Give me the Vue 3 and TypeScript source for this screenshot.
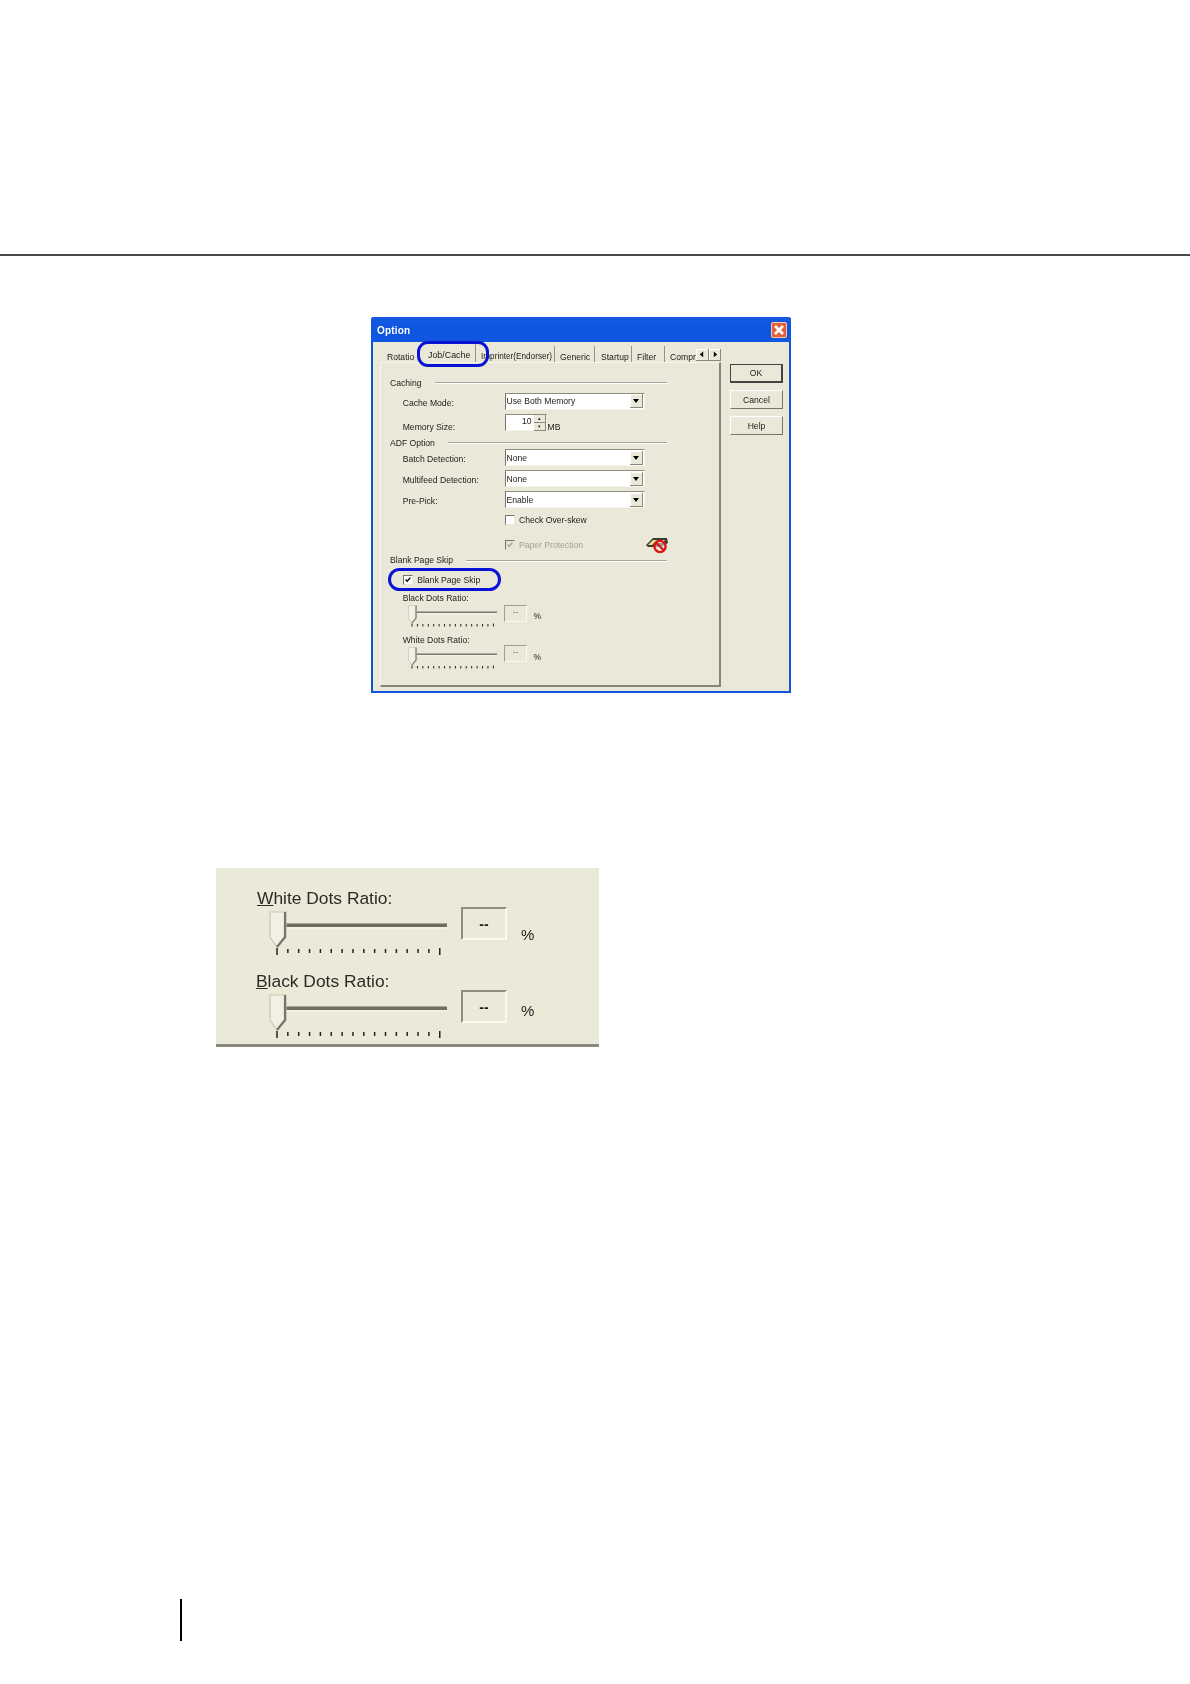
<script setup lang="ts">
const ticks: number[] = Array.from({ length: 16 }, (_, i) => 8 + i * 10.85)
const tabs = [
  { label: 'Rotatio', cls: 'tab-rot' },
  { label: 'Job/Cache', cls: 'tab-job' },
  { label: 'Imprinter(Endorser)', cls: 'tab-imp' },
  { label: 'Generic', cls: 'tab-gen' },
  { label: 'Startup', cls: 'tab-sta' },
  { label: 'Filter', cls: 'tab-fil' },
  { label: 'Compr', cls: 'tab-com' }
]
const combos = [
  { label: 'Batch Detection:', value: 'None', cls: 'mt0' },
  { label: 'Multifeed Detection:', value: 'None', cls: 'mt4' },
  { label: 'Pre-Pick:', value: 'Enable', cls: 'mt4' }
]
const smallSliders = [
  { label: 'Black Dots Ratio:', cls: 'first-small' },
  { label: 'White Dots Ratio:', cls: 'second-small' }
]
const bigSliders = [
  { first: 'W', rest: 'hite Dots Ratio:', cls: 'big-first' },
  { first: 'B', rest: 'lack Dots Ratio:', cls: 'big-second' }
]
</script>

<template>
  <main class="page">
    <div class="rule"></div>

    <section class="dialog">
      <header class="titlebar">
        <span class="title">Option</span>
        <span class="close">
          <svg viewBox="0 0 16 16" width="16" height="16">
            <path d="M4 4 L12 12 M12 4 L4 12" stroke="#fff" stroke-width="2.6" />
          </svg>
        </span>
      </header>

      <div class="body">
        <div class="tabs-col">
          <nav class="tabstrip">
            <span v-for="t in tabs" :key="t.label" class="tab" :class="t.cls">{{ t.label }}</span>
            <span class="scroll">
              <svg viewBox="0 0 12 11" width="12" height="11"><path d="M7.5 2.5 V8.5 L4 5.5 Z" fill="#000" /></svg>
            </span>
            <span class="scroll">
              <svg viewBox="0 0 12 11" width="12" height="11"><path d="M5 2.5 V8.5 L8.5 5.5 Z" fill="#000" /></svg>
            </span>
          </nav>

          <div class="panel">
            <div class="heading h15"><span>Caching</span><i></i></div>

            <div class="row h22">
              <span class="label nudge">Cache Mode:</span>
              <div class="combo"><span>Use Both Memory</span><b class="drop"></b></div>
            </div>

            <div class="row h21">
              <span class="label low">Memory Size:</span>
              <div class="spin">
                <span class="spin-val">10</span>
                <span class="spin-btns"><b>▴</b><b>▾</b></span>
              </div>
              <span class="mb">MB</span>
            </div>

            <div class="heading h13 mt3"><span>ADF Option</span><i></i></div>

            <div v-for="c in combos" :key="c.label" class="row h17" :class="c.cls">
              <span class="label">{{ c.label }}</span>
              <div class="combo"><span>{{ c.value }}</span><b class="drop"></b></div>
            </div>

            <div class="row h16 mt4">
              <span class="label"></span>
              <span class="check"></span>
              <span class="check-text">Check Over-skew</span>
            </div>

            <div class="row h17 mt8">
              <span class="label"></span>
              <span class="check disabled">
                <svg viewBox="0 0 10 10" width="9" height="9"><path d="M2 5 L4 7.2 L8 2.6" fill="none" stroke="#a5a392" stroke-width="1.6" /></svg>
              </span>
              <span class="check-text muted">Paper Protection</span>
              <svg class="no-paper" viewBox="0 0 24 18" width="24" height="18">
                <path d="M1 9 L8 2 H22 L23 7 L16 11 H3 Z" fill="#3b3a33" />
                <path d="M3 9 L8 4 H12 L7 9 Z" fill="#efe08a" />
                <path d="M10 7 L13 4 H20 L17 7 Z" fill="#f6f2dc" />
                <circle cx="15" cy="10.5" r="5.6" fill="#efe9df" fill-opacity="0.55" stroke="#dc1414" stroke-width="2.4" />
                <path d="M11 6.5 L19 14.5" stroke="#dc1414" stroke-width="2.2" />
              </svg>
            </div>

            <div class="heading h14"><span>Blank Page Skip</span><i></i></div>

            <div class="row h25">
              <span class="check indent">
                <svg viewBox="0 0 10 10" width="9" height="9"><path d="M2 5 L4 7.2 L8 2.6" fill="none" stroke="#000" stroke-width="1.7" /></svg>
              </span>
              <span class="check-text">Blank Page Skip</span>
            </div>

            <template v-for="s in smallSliders" :key="s.label">
              <div class="small-label" :class="s.cls">{{ s.label }}</div>
              <div class="slider-row" :class="s.cls">
                <svg class="slider" viewBox="0 0 178 44" width="89" height="22">
                  <path d="M17 13 H178 V16 H17 Z" fill="#77756a" />
                  <path d="M17 17 H178" stroke="#fbfaf0" stroke-width="1.4" />
                  <path d="M1 26 V1 H17 V26 L8 36 Z" fill="#f1f0e4" stroke="#c9c7b5" stroke-width="1.4" />
                  <path d="M16 1 V26 L8 36" fill="none" stroke="#77756a" stroke-width="2.4" />
                  <path v-for="(x, i) in ticks" :key="i" :d="`M${x} ${i === 0 || i === 15 ? 37 : 38} V43`" stroke="#222" stroke-width="2" />
                </svg>
                <span class="readout">--</span>
                <span class="pct">%</span>
              </div>
            </template>
          </div>
        </div>

        <aside class="buttons">
          <button class="btn default">OK</button>
          <button class="btn">Cancel</button>
          <button class="btn">Help</button>
        </aside>
      </div>

      <span class="oval oval-tab"></span>
      <span class="oval oval-skip"></span>
    </section>

    <section class="big">
      <div v-for="s in bigSliders" :key="s.first" class="big-group" :class="s.cls">
        <div class="big-label"><u>{{ s.first }}</u>{{ s.rest }}</div>
        <div class="big-row">
          <svg class="big-slider" viewBox="0 0 178 44" width="178" height="44">
            <path d="M17 13 H178 V16 H17 Z" fill="#6f6d5e" />
            <path d="M17 12.5 H178" stroke="#a8a694" stroke-width="1" />
            <path d="M17 17 H178" stroke="#fbfaf0" stroke-width="1" />
            <path d="M1 26 V1 H17 V26 L8 36 Z" fill="#f1f0e4" stroke="#c9c7b5" stroke-width="1.2" />
            <path d="M16 1 V26 L8 36" fill="none" stroke="#77756a" stroke-width="2.2" />
            <path v-for="(x, i) in ticks" :key="i" :d="`M${x} ${i === 0 || i === 15 ? 37 : 38} V${i === 0 || i === 15 ? 44 : 42}`" stroke="#222" stroke-width="1.5" />
          </svg>
          <span class="big-readout">--</span>
          <span class="big-pct">%</span>
        </div>
      </div>
    </section>

    <div class="marker"></div>
  </main>
</template>

<style scoped>
.page {
  width: 1190px;
  height: 1684px;
  background: #fff;
  padding-top: 254px;
  box-sizing: border-box;
  overflow: hidden;
  font-family: "Liberation Sans", Arial, sans-serif;
  color: #1c1c1a;
}
.rule {
  height: 2px;
  background: #4a4a4a;
}

/* dialog */
.dialog {
  position: relative;
  box-sizing: border-box;
  width: 420px;
  height: 376px;
  margin: 61px 0 0 371px;
  background: #eae8d8;
  border: solid #1553d8;
  border-width: 0 2px 2px;
  border-radius: 3px 3px 0 0;
  font-size: 8.6px;
  filter: blur(0.45px);
}
.titlebar {
  display: flex;
  align-items: center;
  justify-content: space-between;
  height: 25px;
  margin: 0 -2px;
  padding: 0 4px 0 6px;
  border-radius: 3px 3px 0 0;
  background: linear-gradient(#1559e0, #0d54e0 60%, #1058e2);
}
.title {
  color: #fff;
  font-weight: bold;
  font-size: 10px;
  letter-spacing: 0.2px;
  padding-top: 2px;
}
.close {
  display: flex;
  width: 16px;
  height: 16px;
  border-radius: 2px;
  background: #e2613d;
  outline: 1px solid #f3c9b4;
  outline-offset: -1px;
}
.body {
  display: flex;
  padding-left: 7px;
}
.tabs-col {
  width: 341px;
}
.tabstrip {
  display: flex;
  height: 20px;
  align-items: flex-end;
}
.tab {
  box-sizing: border-box;
  height: 16px;
  line-height: 22px;
  white-space: nowrap;
  overflow: hidden;
  border-right: 1px solid #97957f;
  flex: none;
}
.tab-rot { width: 41px; padding-left: 7px; border-right: 0; }
.tab-job { width: 55px; padding-left: 7px; height: 20px; line-height: 26px; font-size: 8.9px; }
.tab-imp { width: 79px; padding-left: 5px; font-size: 8.2px; }
.tab-gen { width: 40px; padding-left: 5px; }
.tab-sta { width: 37px; padding-left: 6px; }
.tab-fil { width: 33px; padding-left: 5px; }
.tab-com { width: 31px; padding-left: 5px; border-right: 0; }
.scroll {
  display: flex;
  box-sizing: border-box;
  flex: none;
  width: 12.5px;
  height: 12px;
  margin-bottom: 1px;
  background: #eae8d8;
  border: solid #8c8a78;
  border-width: 0 1px 1px 0;
  box-shadow: inset 1px 1px 0 #fff;
}
.panel {
  box-sizing: border-box;
  height: 325px;
  padding: 12px 0 0 9px;
  border: solid;
  border-width: 1px 2px 2px 1px;
  border-color: #f6f5ea #878575 #878575 #f6f5ea;
}
.h13 { height: 13px; }
.h14 { height: 14px; }
.h15 { height: 15px; }
.h16 { height: 16px; }
.h17 { height: 17px; }
.h21 { height: 21px; }
.h22 { height: 22px; }
.h25 { height: 25px; }
.mt0 { margin-top: 0; }
.mt3 { margin-top: 3px; }
.mt4 { margin-top: 4px; }
.mt8 { margin-top: 8px; }
.heading {
  display: flex;
  align-items: center;
  gap: 13px;
  padding-right: 52px;
  white-space: nowrap;
}
.heading i {
  flex: 1;
  height: 1px;
  background: #a8a694;
  box-shadow: 0 1px 0 #fff;
}
.row {
  display: flex;
  align-items: center;
}
.label {
  box-sizing: border-box;
  flex: none;
  width: 114.5px;
  padding-left: 12.7px;
  padding-top: 2px;
}
.label.nudge {
  padding-top: 4px;
}
.label.low {
  padding-top: 8px;
}
.combo {
  display: flex;
  align-items: center;
  justify-content: space-between;
  box-sizing: border-box;
  width: 140px;
  height: 17px;
  padding: 1px 1px 1px 1px;
  background: #fff;
  border: 1px solid;
  border-color: #8f8d7b #f6f5ea #f6f5ea #77756a;
}
.drop {
  position: relative;
  display: block;
  box-sizing: border-box;
  width: 13px;
  height: 14px;
  background: #eae8d8;
  border: solid #8c8a78;
  border-width: 0 1px 1px 0;
  box-shadow: inset 1px 1px 0 #fff;
}
.drop::after {
  content: "";
  position: absolute;
  left: 3px;
  top: 5px;
  border: 3px solid transparent;
  border-top: 4px solid #000;
  border-bottom: 0;
}
.spin {
  display: flex;
  box-sizing: border-box;
  width: 42px;
  height: 17px;
  background: #fff;
  border: 1px solid;
  border-color: #8f8d7b #f6f5ea #f6f5ea #77756a;
}
.spin-val {
  flex: 1;
  text-align: right;
  padding-right: 2px;
  line-height: 13px;
}
.spin-btns {
  display: flex;
  flex-direction: column;
  width: 12px;
}
.spin-btns b {
  flex: 1;
  box-sizing: border-box;
  background: #eae8d8;
  border: solid #8c8a78;
  border-width: 0 1px 1px 0;
  font-size: 5px;
  font-weight: normal;
  line-height: 7px;
  text-align: center;
}
.mb {
  margin: 8px 0 0 1px;
}
.check {
  display: flex;
  align-items: center;
  justify-content: center;
  flex: none;
  box-sizing: border-box;
  width: 10px;
  height: 10px;
  background: #fff;
  border: 1px solid;
  border-color: #77756a #e9e7d9 #e9e7d9 #77756a;
}
.check.disabled {
  background: #e6e4d3;
}
.check.indent {
  margin-left: 12.7px;
}
.check-text {
  margin-left: 4.5px;
}
.muted {
  color: #a5a392;
}
.no-paper {
  margin-left: 62px;
}
.small-label {
  height: 13px;
  line-height: 13px;
  padding-left: 12.7px;
}
.slider-row {
  display: flex;
  align-items: flex-start;
  padding-left: 18px;
}
.small-label.second-small {
  margin-top: 6px;
}
.slider-row.first-small {
  height: 23px;
}
.slider-row.second-small {
  height: 24px;
}
.slider {
  flex: none;
}
.readout {
  box-sizing: border-box;
  flex: none;
  width: 23px;
  height: 17px;
  margin-left: 7px;
  line-height: 12px;
  text-align: center;
  color: #77756a;
  border: 1px solid;
  border-color: #a09e8c #fbfaf0 #fbfaf0 #a09e8c;
}
.second-small .readout {
  margin-top: -2px;
}
.pct {
  margin: 6px 0 0 6.5px;
  line-height: 10px;
}
.second-small .pct {
  margin-top: 5px;
}

/* buttons */
.buttons {
  display: flex;
  flex-direction: column;
  gap: 7px;
  width: 53px;
  margin-left: 9px;
  padding-top: 22px;
}
.btn {
  box-sizing: border-box;
  width: 53px;
  height: 19px;
  padding: 0;
  background: #eae8d8;
  border: 1px solid;
  border-color: #fff #77756a #77756a #fff;
  font: inherit;
  color: #1c1c1a;
}
.btn.default {
  border: 1px solid #444;
  border-width: 1px 2px 2px 1px;
}

/* blue annotations lying over the dialog */
.oval {
  position: absolute;
  box-sizing: border-box;
  border: 3.6px solid #0a12d6;
  pointer-events: none;
}
.oval-tab {
  left: 44px;
  top: 24px;
  width: 72px;
  height: 26px;
  border-radius: 11px;
}
.oval-skip {
  left: 15px;
  top: 251px;
  width: 113px;
  height: 23px;
  border-radius: 12px;
}

/* enlarged sliders */
.big {
  box-sizing: border-box;
  width: 383px;
  height: 179px;
  margin: 175px 0 0 216px;
  padding: 21px 0 0 41px;
  background: #ebe9d8;
  border-bottom: 3px solid #8b897b;
  font-size: 17.4px;
  filter: blur(0.5px);
}
.big-group {
  height: 83px;
}
.big-label {
  height: 22px;
  line-height: 18px;
  color: #2b2b26;
}
.big-second .big-label {
  margin-left: -1px;
}
.big-row {
  display: flex;
  align-items: flex-start;
  padding-left: 12px;
}
.big-slider {
  flex: none;
}
.big-readout {
  box-sizing: border-box;
  flex: none;
  width: 46px;
  height: 33px;
  margin: -4px 0 0 14px;
  line-height: 30px;
  font-size: 14px;
  font-weight: bold;
  text-align: center;
  border: 2px solid;
  border-color: #8f8d7b #fbfaf0 #fbfaf0 #8f8d7b;
}
.big-pct {
  margin: 15px 0 0 14px;
  line-height: 18px;
  font-size: 15px;
  letter-spacing: -1px;
}
.big-second .big-pct {
  margin-top: 8px;
}

.marker {
  width: 2px;
  height: 42px;
  margin: 552px 0 0 180px;
  background: #000;
}
</style>
